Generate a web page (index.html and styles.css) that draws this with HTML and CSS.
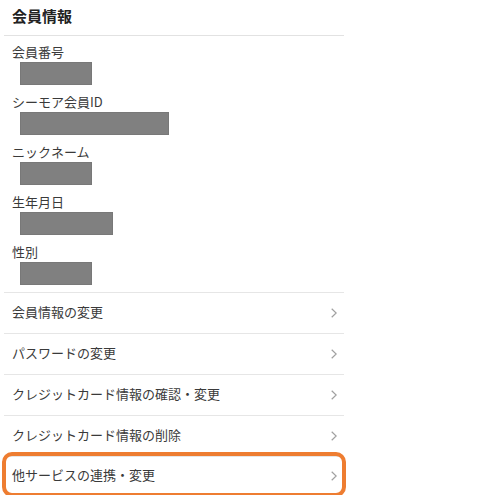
FILE: index.html
```html
<!DOCTYPE html>
<html>
<head>
  <link rel="stylesheet" href="styles.css">
</head>
<body>
  <div class="page">
    <h1 class="title">会員情報</h1>

    <div class="fields">
      <div class="field">
        <div class="field-label">会員番号</div>
        <div class="mask w-short"></div>
      </div>
      <div class="field">
        <div class="field-label">シーモア会員ID</div>
        <div class="mask w-long"></div>
      </div>
      <div class="field">
        <div class="field-label">ニックネーム</div>
        <div class="mask w-short"></div>
      </div>
      <div class="field">
        <div class="field-label">生年月日</div>
        <div class="mask w-mid"></div>
      </div>
      <div class="field">
        <div class="field-label">性別</div>
        <div class="mask w-short"></div>
      </div>
    </div>

    <ul class="menu">
      <li class="menu-item">会員情報の変更<svg class="chevron" viewBox="0 0 6 10"><path d="M0.7 0.7 L5.2 5 L0.7 9.3"/></svg></li>
      <li class="menu-item">パスワードの変更<svg class="chevron" viewBox="0 0 6 10"><path d="M0.7 0.7 L5.2 5 L0.7 9.3"/></svg></li>
      <li class="menu-item">クレジットカード情報の確認・変更<svg class="chevron" viewBox="0 0 6 10"><path d="M0.7 0.7 L5.2 5 L0.7 9.3"/></svg></li>
      <li class="menu-item">クレジットカード情報の削除<svg class="chevron" viewBox="0 0 6 10"><path d="M0.7 0.7 L5.2 5 L0.7 9.3"/></svg></li>
      <li class="menu-item highlight">他サービスの連携・変更<svg class="chevron" viewBox="0 0 6 10"><path d="M0.7 0.7 L5.2 5 L0.7 9.3"/></svg></li>
    </ul>
  </div>
</body>
</html>
```

FILE: styles.css
```css
body {
  margin: 0;
  background-color: #fff;
  font-family: "Noto Sans CJK JP", "Noto Sans", sans-serif;
  color: #3a3a3a;
}
.page {
  width: 340px;
  margin-left: 4px;
}
.title {
  margin: 0;
  padding: 3px 8px 0;
  height: 32px;
  line-height: 26px;
  font-size: 15px;
  font-weight: bold;
  color: #222;
  border-bottom: 1px solid #e2e2e2;
}
/* member data, values are masked */
.fields {
  padding: 8px 8px 0;
  border-bottom: 1px solid #e6e6e6;
}
.field {
  margin-bottom: 9px;
}
.field:last-child {
  margin-bottom: 7px;
}
.field-label {
  font-size: 13px;
  line-height: 15px;
  margin-bottom: 3px;
}
.mask {
  height: 21px;
  margin-left: 8px;
  background-color: #808080;
  border: 1px solid #787878;
}
.w-short { width: 70px; }
.w-mid { width: 91px; }
.w-long { width: 147px; }

.menu {
  list-style: none;
  margin: 0;
  padding: 0;
}
.menu-item {
  box-sizing: border-box;
  display: flex;
  align-items: center;
  justify-content: space-between;
  height: 41px;
  padding: 0 7px 3px 8px;
  font-size: 13px;
  border-bottom: 1px solid #e6e6e6;
}
.chevron {
  width: 6px;
  height: 10px;
  margin-top: 3px;
  fill: none;
  stroke: #a0a0a0;
  stroke-width: 1.2;
}
/* orange frame around the last link */
.highlight {
  margin-top: -3px;
  height: 41px;
  padding-bottom: 1px;
  border-bottom: none;
  border-radius: 8px;
  outline: 4px solid #ee7d31;
  outline-offset: -2px;
}
```
